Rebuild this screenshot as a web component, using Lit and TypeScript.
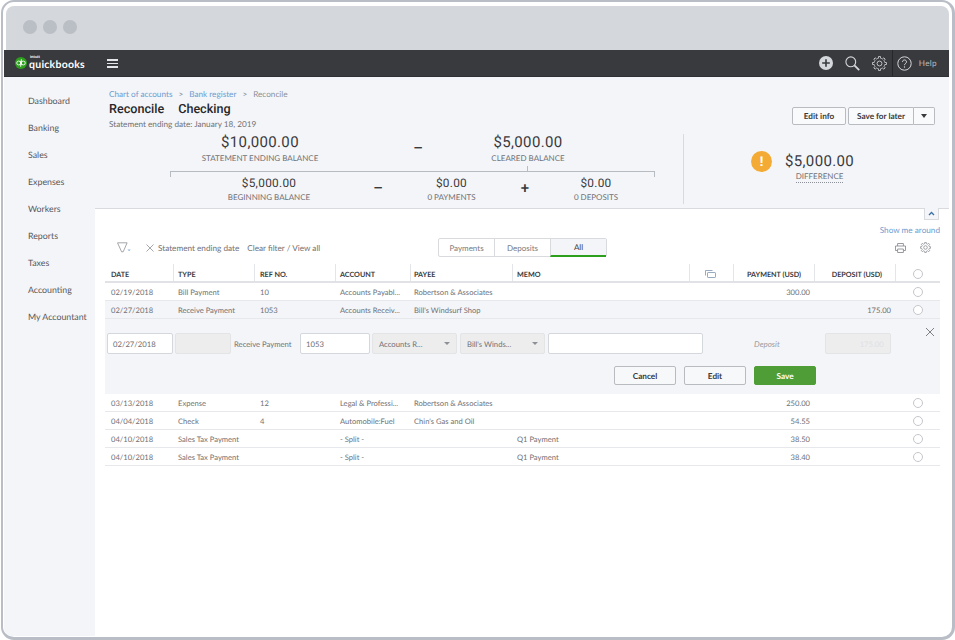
import { css, html, LitElement, svg } from "lit";
import { customElement } from "lit/decorators.js";

interface Row {
  date: string;
  type: string;
  ref: string;
  account: string;
  payee: string;
  memo: string;
  payment: string;
  deposit: string;
  shaded?: boolean;
}

const NAV = [
  "Dashboard",
  "Banking",
  "Sales",
  "Expenses",
  "Workers",
  "Reports",
  "Taxes",
  "Accounting",
  "My Accountant",
];

const TOP_ROWS: Row[] = [
  { date: "02/19/2018", type: "Bill Payment", ref: "10", account: "Accounts Payabl...", payee: "Robertson & Associates", memo: "", payment: "300.00", deposit: "" },
  { date: "02/27/2018", type: "Receive Payment", ref: "1053", account: "Accounts Receiv...", payee: "Bill's Windsurf Shop", memo: "", payment: "", deposit: "175.00", shaded: true },
];

const BOTTOM_ROWS: Row[] = [
  { date: "03/13/2018", type: "Expense", ref: "12", account: "Legal & Professi...", payee: "Robertson & Associates", memo: "", payment: "250.00", deposit: "" },
  { date: "04/04/2018", type: "Check", ref: "4", account: "Automobile:Fuel", payee: "Chin's Gas and Oil", memo: "", payment: "54.55", deposit: "" },
  { date: "04/10/2018", type: "Sales Tax Payment", ref: "", account: "- Split -", payee: "", memo: "Q1 Payment", payment: "38.50", deposit: "" },
  { date: "04/10/2018", type: "Sales Tax Payment", ref: "", account: "- Split -", payee: "", memo: "Q1 Payment", payment: "38.40", deposit: "" },
];

function gearPath(c: number, outer: number, inner: number, teeth: number) {
  const pts: string[] = [];
  const step = (Math.PI * 2) / teeth;
  for (let i = 0; i < teeth; i++) {
    const a = i * step;
    const list: [number, number][] = [
      [inner, a - step * 0.5],
      [inner, a - step * 0.27],
      [outer, a - step * 0.17],
      [outer, a + step * 0.17],
      [inner, a + step * 0.27],
    ];
    for (const [r, t] of list) {
      pts.push(`${(c + r * Math.cos(t)).toFixed(2)} ${(c + r * Math.sin(t)).toFixed(2)}`);
    }
  }
  return `M${pts.join("L")}Z`;
}

const gear = (size: number, color: string, weight = 1) => html`
  <svg width=${size} height=${size} viewBox="0 0 16 16" fill="none" stroke=${color} stroke-width=${weight} stroke-linejoin="round">
    ${svg`<path d=${gearPath(8, 7.6, 5.7, 8)}></path><circle cx="8" cy="8" r="2.6"></circle>`}
  </svg>
`;

@customElement("app-root")
export class AppRoot extends LitElement {
  static override styles = css`
    :host {
      display: block;
      width: 955px;
      height: 640px;
      background: #fff;
      font-family: "Lato", "Liberation Sans", sans-serif;
      color: #6f7075;
      text-rendering: geometricPrecision;
    }
    * {
      box-sizing: border-box;
    }
    .frame {
      height: 640px;
      margin-left: 1px;
      border: solid #b9bdc6;
      border-width: 2px 3px 3px 2px;
      border-radius: 13px;
      padding: 4px 3px 1px 1px;
      display: flex;
      flex-direction: column;
    }
    .chrome {
      height: 44px;
      margin-left: 2px;
      background: #d4d7db;
      border-radius: 8px 8px 0 0;
      display: flex;
      align-items: center;
      gap: 6px;
      padding: 0 0 3px 17px;
    }
    .chrome i {
      width: 14px;
      height: 14px;
      border-radius: 50%;
      background: #babec5;
    }
    .bar {
      height: 27px;
      background: #393a3d;
      display: flex;
      align-items: center;
      border-bottom: 1px solid #2f3033;
      flex: none;
    }
    .logo {
      display: flex;
      align-items: center;
      margin-left: 11px;
      width: 92px;
    }
    .word {
      display: flex;
      flex-direction: column;
      margin: -1px 0 0 2px;
      color: #fff;
    }
    .word small {
      font: 700 4px/4px "Liberation Sans", sans-serif;
      margin: 0 0 2.5px 1px;
    }
    .word b {
      font: 700 10.5px/9px "Lato", sans-serif;
      letter-spacing: 0.25px;
    }
    .burger {
      width: 11px;
      height: 9px;
      border-top: 2px solid #e4e5e7;
      border-bottom: 2px solid #e4e5e7;
      display: flex;
      align-items: center;
    }
    .burger span {
      display: block;
      width: 100%;
      height: 1px;
      background: #e4e5e7;
    }
    .bar-right {
      margin-left: auto;
      display: flex;
      align-items: center;
      height: 100%;
      color: #b9bcc1;
      font-size: 8.2px;
      letter-spacing: 0.3px;
    }
    .bar-right svg {
      display: block;
    }
    .divider {
      width: 1px;
      height: 100%;
      background: #26272a;
      margin: 0 4px 0 5px;
    }
    .help {
      margin: 0 12px 0 7px;
    }
    .body {
      flex: 1;
      display: flex;
      min-height: 0;
    }
    .side {
      width: 91px;
      background: #f4f5f8;
      border-radius: 0 0 0 8px;
      padding: 10px 0 0 24px;
      font-size: 8.8px;
      color: #56575c;
    }
    .side div {
      height: 27px;
      line-height: 27px;
      white-space: nowrap;
    }
    .main {
      flex: 1;
      display: flex;
      flex-direction: column;
      min-width: 0;
    }
    .head {
      height: 132px;
      background: #f4f5f8;
      border-bottom: 1px solid #d8dade;
    }
    .head-top {
      height: 57px;
      display: flex;
      justify-content: space-between;
      padding: 12px 14px 0 14px;
    }
    .crumb {
      font-size: 8.2px;
      line-height: 10px;
      color: #8d9096;
      display: flex;
      gap: 6px;
    }
    .crumb a {
      color: #6d9bd0;
    }
    .title {
      display: flex;
      gap: 14px;
      margin-top: 4px;
      font: 500 12.6px/14px "Roboto", sans-serif;
      color: #26272a;
    }
    .date {
      font-size: 8.2px;
      line-height: 11px;
      margin-top: 2px;
    }
    .head-btns {
      display: flex;
      gap: 2px;
      padding-top: 18px;
      align-items: flex-start;
    }
    .btn {
      height: 18px;
      border: 1px solid #b8bbc0;
      border-radius: 2px;
      background: #f9fafb;
      color: #393a3d;
      font-size: 8.2px;
      font-weight: 700;
      display: flex;
      align-items: center;
      justify-content: center;
    }
    .btn.info {
      width: 54px;
    }
    .btn.later {
      width: 66px;
      border-radius: 2px 0 0 2px;
    }
    .btn.caret {
      width: 21px;
      margin-left: -2px;
      border-left: 0;
      border-radius: 0 2px 2px 0;
    }
    .caret-down {
      width: 0;
      height: 0;
      border: 3px solid transparent;
      border-top: 4px solid #393a3d;
      border-bottom: 0;
    }
    .summary {
      display: flex;
      height: 70px;
    }
    .balances {
      width: 589px;
      border-right: 1px solid #d8dade;
    }
    .amount {
      font: 400 15px/15px "Roboto", sans-serif;
      letter-spacing: 0.35px;
      color: #393a3d;
    }
    .amount.small {
      font-size: 11.8px;
      line-height: 13px;
      letter-spacing: 0.3px;
    }
    .label {
      font-size: 8px;
      line-height: 10px;
      white-space: nowrap;
      margin-top: 3px;
    }
    .row-two .label {
      margin-top: 2px;
    }
    .row-one {
      display: grid;
      grid-template-columns: 296px 20px 200px;
      padding: 1px 0 0 17px;
      text-align: center;
      height: 32px;
    }
    .row-two {
      display: grid;
      grid-template-columns: 198px 20px 127px 20px 122px;
      margin-left: 75px;
      text-align: center;
    }
    .op {
      font: 500 15px/16px "Roboto", sans-serif;
      color: #393a3d;
      text-align: center;
    }
    .row-one .op {
      padding-top: 5px;
    }
    .row-two .op {
      padding-top: 3px;
    }
    .stem {
      width: 1px;
      height: 5px;
      margin-left: 432px;
      background: #b7bbc2;
    }
    .bracket {
      margin-left: 75px;
      width: 485px;
      height: 6px;
      border: 1px solid #b7bbc2;
      border-bottom: 0;
    }
    .diff-box {
      flex: 1;
      display: flex;
      padding: 17px 0 0 67px;
    }
    .warn {
      width: 21px;
      height: 21px;
      border-radius: 50%;
      background: #f4ab36;
      color: #fff;
      font: 700 14px/21px "Liberation Sans", sans-serif;
      text-align: center;
    }
    .diff-text {
      margin: 3px 0 0 13px;
      display: flex;
      flex-direction: column;
      align-items: center;
    }
    .diff-text .label {
      margin-top: 2px;
      border-bottom: 1px dotted #8d9096;
      padding-bottom: 1px;
    }
    .content {
      flex: 1;
      padding: 0 9px 0 10px;
      display: flex;
      flex-direction: column;
    }
    .collapse {
      width: 15px;
      height: 12px;
      align-self: flex-end;
      margin: -1px 1px 0 0;
      border: 1px solid #d8dade;
      border-top: 0;
      background: #f4f5f8;
      display: flex;
      align-items: center;
      justify-content: center;
    }
    .around {
      align-self: flex-end;
      margin-top: 5px;
      font-size: 8.2px;
      line-height: 11px;
      color: #6d9bd0;
    }
    .tools {
      display: grid;
      grid-template-columns: 333px 169px 1fr;
      height: 19px;
      margin-top: 2px;
      align-items: center;
    }
    .filter {
      display: flex;
      align-items: center;
      font-size: 8.2px;
      padding-left: 12px;
      white-space: nowrap;
    }
    .filter .x {
      margin: 0 4px 0 15px;
    }
    .filter .clear {
      margin-left: 8px;
    }
    .tabs {
      display: flex;
      height: 19px;
      border: 1px solid #d8dade;
      border-radius: 2px;
      background: #fff;
      font-size: 8px;
      color: #7a7b80;
    }
    .tabs div {
      flex: 1;
      display: flex;
      align-items: center;
      justify-content: center;
      border-left: 1px solid #d8dade;
    }
    .tabs div:first-child {
      border-left: 0;
    }
    .tabs .on {
      background: #f4f5f8;
      color: #393a3d;
      border-bottom: 2px solid #2ca01c;
      margin-bottom: -1px;
    }
    .tool-icons {
      display: flex;
      justify-content: flex-end;
      align-items: center;
      gap: 14px;
      padding-right: 9px;
    }
    .grid {
      display: grid;
      grid-template-columns: 68px 81px 81px 75px 102px 177px 44px 81px 81px 45px;
      align-items: center;
      font-size: 7.6px;
    }
    .grid > div {
      padding-left: 6px;
      white-space: nowrap;
      overflow: hidden;
    }
    .row > div:nth-child(2),
    .row > div:nth-child(4),
    .row > div:nth-child(6) {
      padding-left: 5px;
    }
    .row > div:nth-child(5) {
      padding-left: 4px;
    }
    .grid .num {
      text-align: right;
      padding: 0 4px 0 0;
    }
    .grid .mid {
      padding: 0;
      display: flex;
      justify-content: center;
    }
    .thead {
      height: 19px;
      margin-top: 7px;
      border-bottom: 2px solid #e0e2e6;
      color: #393a3d;
      font-weight: 700;
      font-size: 7.2px;
      align-items: stretch;
    }
    .grid.thead > div {
      border-left: 1px solid #e3e5e8;
      display: flex;
      align-items: center;
      padding-left: 4px;
      padding-top: 3px;
    }
    .grid.thead > div:first-child {
      border-left: 0;
      padding-left: 6px;
    }
    .grid.thead > div:nth-child(3) {
      padding-left: 5px;
    }
    .grid.thead > div:nth-child(5) {
      padding-left: 3px;
    }
    .grid.thead > .num {
      justify-content: flex-end;
      padding-right: 13px;
    }
    .grid.thead > .mid {
      padding-left: 0;
    }
    .grid.thead > .copy {
      padding-right: 3px;
    }
    .row {
      height: 18px;
      border-bottom: 1px solid #e6e8eb;
    }
    .row.shaded {
      background: #f4f5f8;
    }
    .radio {
      display: block;
      width: 10px;
      height: 10px;
      border-radius: 50%;
      border: 1px solid #c4c6cb;
      background: #fff;
    }
    .editor {
      height: 75px;
      background: #f4f5f8;
      display: flex;
      flex-direction: column;
      position: relative;
      padding: 14px 0 0 2px;
      font-size: 7.7px;
    }
    .fields {
      display: flex;
      align-items: center;
      height: 21px;
    }
    .input {
      height: 21px;
      background: #fff;
      border: 1px solid #d4d7db;
      border-radius: 2px;
      display: flex;
      align-items: center;
      padding-left: 5px;
      font-size: 7.7px;
      flex: none;
    }
    .input.off {
      background: #ededee;
      border-color: #e3e4e6;
      justify-content: space-between;
      padding: 0 6px;
    }
    .tri {
      width: 0;
      height: 0;
      border: 3px solid transparent;
      border-top: 3px solid #8d9096;
      border-bottom: 0;
    }
    .kind {
      margin: 0 10px 0 3px;
      white-space: nowrap;
      width: 56px;
    }
    .dep-label {
      font-style: italic;
      color: #9a9ca1;
      font-size: 8px;
      margin: 0 45px 0 51px;
    }
    .input.dep-value {
      justify-content: flex-end;
      color: #e0e1e3;
    }
    .close {
      position: absolute;
      top: 8px;
      right: 5px;
    }
    .actions {
      display: flex;
      justify-content: flex-end;
      gap: 8px;
      margin-top: 12px;
      padding-right: 124px;
    }
    .act {
      width: 62px;
      height: 19px;
      border: 1px solid #b8bbc0;
      border-radius: 2px;
      background: #f7f8f9;
      color: #393a3d;
      font-size: 8.2px;
      font-weight: 700;
      display: flex;
      align-items: center;
      justify-content: center;
    }
    .act.save {
      background: #4f9d37;
      border-color: #4f9d37;
      color: #fff;
    }
  `;

  private _row(r: Row) {
    return html`
      <div class="grid row ${r.shaded ? "shaded" : ""}">
        <div>${r.date}</div>
        <div>${r.type}</div>
        <div>${r.ref}</div>
        <div>${r.account}</div>
        <div>${r.payee}</div>
        <div>${r.memo}</div>
        <div></div>
        <div class="num">${r.payment}</div>
        <div class="num">${r.deposit}</div>
        <div class="mid"><span class="radio"></span></div>
      </div>
    `;
  }

  private _renderBar() {
    return html`
      <div class="bar">
        <div class="logo">
          <svg width="12" height="12" viewBox="0 0 22 22">
            <circle cx="11" cy="11" r="11" fill="#2ca01c"></circle>
            <g fill="none" stroke="#fff" stroke-width="1.6">
              <circle cx="6.8" cy="11" r="3.6"></circle>
              <circle cx="15.2" cy="11" r="3.6"></circle>
              <path d="M10.4 7v11M11.6 4v11"></path>
            </g>
          </svg>
          <div class="word"><small>intuit</small><b>quickbooks</b></div>
        </div>
        <div class="burger"><span></span></div>
        <div class="bar-right">
          <svg width="14" height="14" viewBox="0 0 14 14" style="margin-right:12px">
            <circle cx="7" cy="7" r="7" fill="#d4d7dc"></circle>
            <path d="M7 3.2v7.6M3.2 7h7.6" stroke="#393a3d" stroke-width="1.6"></path>
          </svg>
          <svg width="15" height="15" viewBox="0 0 15 15" fill="none" stroke="#d4d7dc" style="margin-right:12px">
            <circle cx="5.8" cy="5.8" r="4.9" stroke-width="1.1"></circle>
            <path d="M9.4 9.4l4.8 4.8" stroke-width="1.8"></path>
          </svg>
          ${gear(15, "#c6c9ce")}
          <div class="divider"></div>
          <svg width="15" height="15" viewBox="0 0 15 15" fill="none">
            <circle cx="7.5" cy="7.5" r="6.7" stroke="#d4d7dc" stroke-width="1"></circle>
            <path d="M5.5 5.9c0-2.6 4-2.6 4 0 0 1.5-2 1.6-2 3.3" stroke="#d4d7dc" stroke-width="1"></path>
            <circle cx="7.5" cy="11" r=".7" fill="#d4d7dc"></circle>
          </svg>
          <span class="help">Help</span>
        </div>
      </div>
    `;
  }

  private _renderHead() {
    return html`
      <div class="head">
        <div class="head-top">
          <div>
            <div class="crumb">
              <a>Chart of accounts</a><span>&gt;</span><a>Bank register</a><span>&gt;</span><span>Reconcile</span>
            </div>
            <div class="title"><span>Reconcile</span><span>Checking</span></div>
            <div class="date">Statement ending date: January 18, 2019</div>
          </div>
          <div class="head-btns">
            <div class="btn info">Edit info</div>
            <div class="btn later">Save for later</div>
            <div class="btn caret"><span class="caret-down"></span></div>
          </div>
        </div>
        <div class="summary">
          <div class="balances">
            <div class="row-one">
              <div>
                <div class="amount">$10,000.00</div>
                <div class="label">STATEMENT ENDING BALANCE</div>
              </div>
              <div class="op">–</div>
              <div>
                <div class="amount">$5,000.00</div>
                <div class="label">CLEARED BALANCE</div>
              </div>
            </div>
            <div class="stem"></div>
            <div class="bracket"></div>
            <div class="row-two">
              <div>
                <div class="amount small">$5,000.00</div>
                <div class="label">BEGINNING BALANCE</div>
              </div>
              <div class="op">–</div>
              <div>
                <div class="amount small">$0.00</div>
                <div class="label">0 PAYMENTS</div>
              </div>
              <div class="op">+</div>
              <div>
                <div class="amount small">$0.00</div>
                <div class="label">0 DEPOSITS</div>
              </div>
            </div>
          </div>
          <div class="diff-box">
            <div class="warn">!</div>
            <div class="diff-text">
              <div class="amount">$5,000.00</div>
              <div class="label">DIFFERENCE</div>
            </div>
          </div>
        </div>
      </div>
    `;
  }

  private _renderTools() {
    return html`
      <div class="collapse">
        <svg width="7" height="5" viewBox="0 0 7 5" fill="none">
          <path d="M1 4l2.5-2.5L6 4" stroke="#3a6ea5" stroke-width="1.3"></path>
        </svg>
      </div>
      <div class="around">Show me around</div>
      <div class="tools">
        <div class="filter">
          <svg width="14" height="11" viewBox="0 0 14 11" fill="none">
            <path d="M.5 .8h9.6L6.2 9.8h-1.6z" stroke="#8d9096" stroke-width=".8"></path>
            <path d="M10.5 7.5h3.2l-1.6 1.8z" fill="#8fb3d9"></path>
          </svg>
          <svg class="x" width="8" height="8" viewBox="0 0 8 8">
            <path d="M.5 .5l7 7M7.5 .5l-7 7" stroke="#8d9096" stroke-width=".8"></path>
          </svg>
          <span>Statement ending date</span>
          <span class="clear">Clear filter / View all</span>
        </div>
        <div class="tabs">
          <div>Payments</div>
          <div>Deposits</div>
          <div class="on">All</div>
        </div>
        <div class="tool-icons">
          <svg width="11" height="10" viewBox="0 0 11 10" fill="none" stroke="#8d9096" stroke-width=".9">
            <path d="M2.6 3V.5h5.8V3M2.6 7.5H.5V3h10v4.5H8.4"></path>
            <path d="M2.6 6h5.8v3.5H2.6z"></path>
          </svg>
          ${gear(11, "#8d9096", 1.2)}
        </div>
      </div>
    `;
  }

  private _renderEditor() {
    return html`
      <div class="editor">
        <div class="fields">
          <div class="input" style="width:66px">02/27/2018</div>
          <div class="input off" style="width:56px;margin-left:2px"></div>
          <div class="kind">Receive Payment</div>
          <div class="input" style="width:70px">1053</div>
          <div class="input off" style="width:85px;margin-left:2px">Accounts R...<span class="tri"></span></div>
          <div class="input off" style="width:85px;margin-left:3px">Bill's Winds...<span class="tri"></span></div>
          <div class="input" style="width:155px;margin-left:3px"></div>
          <div class="dep-label">Deposit</div>
          <div class="input off dep-value" style="width:66px">175.00</div>
        </div>
        <svg class="close" width="10" height="10" viewBox="0 0 10 10">
          <path d="M1 1l8 8M9 1l-8 8" stroke="#7f8186" stroke-width="1"></path>
        </svg>
        <div class="actions">
          <div class="act">Cancel</div>
          <div class="act">Edit</div>
          <div class="act save">Save</div>
        </div>
      </div>
    `;
  }

  override render() {
    return html`
      <div class="frame">
        <div class="chrome"><i></i><i></i><i></i></div>
        ${this._renderBar()}
        <div class="body">
          <div class="side">${NAV.map((n) => html`<div>${n}</div>`)}</div>
          <div class="main">
            ${this._renderHead()}
            <div class="content">
              ${this._renderTools()}
              <div class="grid thead">
                <div>DATE</div>
                <div>TYPE</div>
                <div>REF NO.</div>
                <div>ACCOUNT</div>
                <div>PAYEE</div>
                <div>MEMO</div>
                <div class="mid copy">
                  <svg width="11" height="8" viewBox="0 0 11 8" fill="none" stroke="#8ba0b8" stroke-width=".9">
                    <path d="M.5 5.5V.5h7"></path>
                    <rect x="2.5" y="2.5" width="8" height="5" rx=".6"></rect>
                  </svg>
                </div>
                <div class="num">PAYMENT (USD)</div>
                <div class="num">DEPOSIT (USD)</div>
                <div class="mid"><span class="radio"></span></div>
              </div>
              ${TOP_ROWS.map((r) => this._row(r))}
              ${this._renderEditor()}
              ${BOTTOM_ROWS.map((r) => this._row(r))}
            </div>
          </div>
        </div>
      </div>
    `;
  }
}

declare global {
  interface HTMLElementTagNameMap {
    "app-root": AppRoot;
  }
}
